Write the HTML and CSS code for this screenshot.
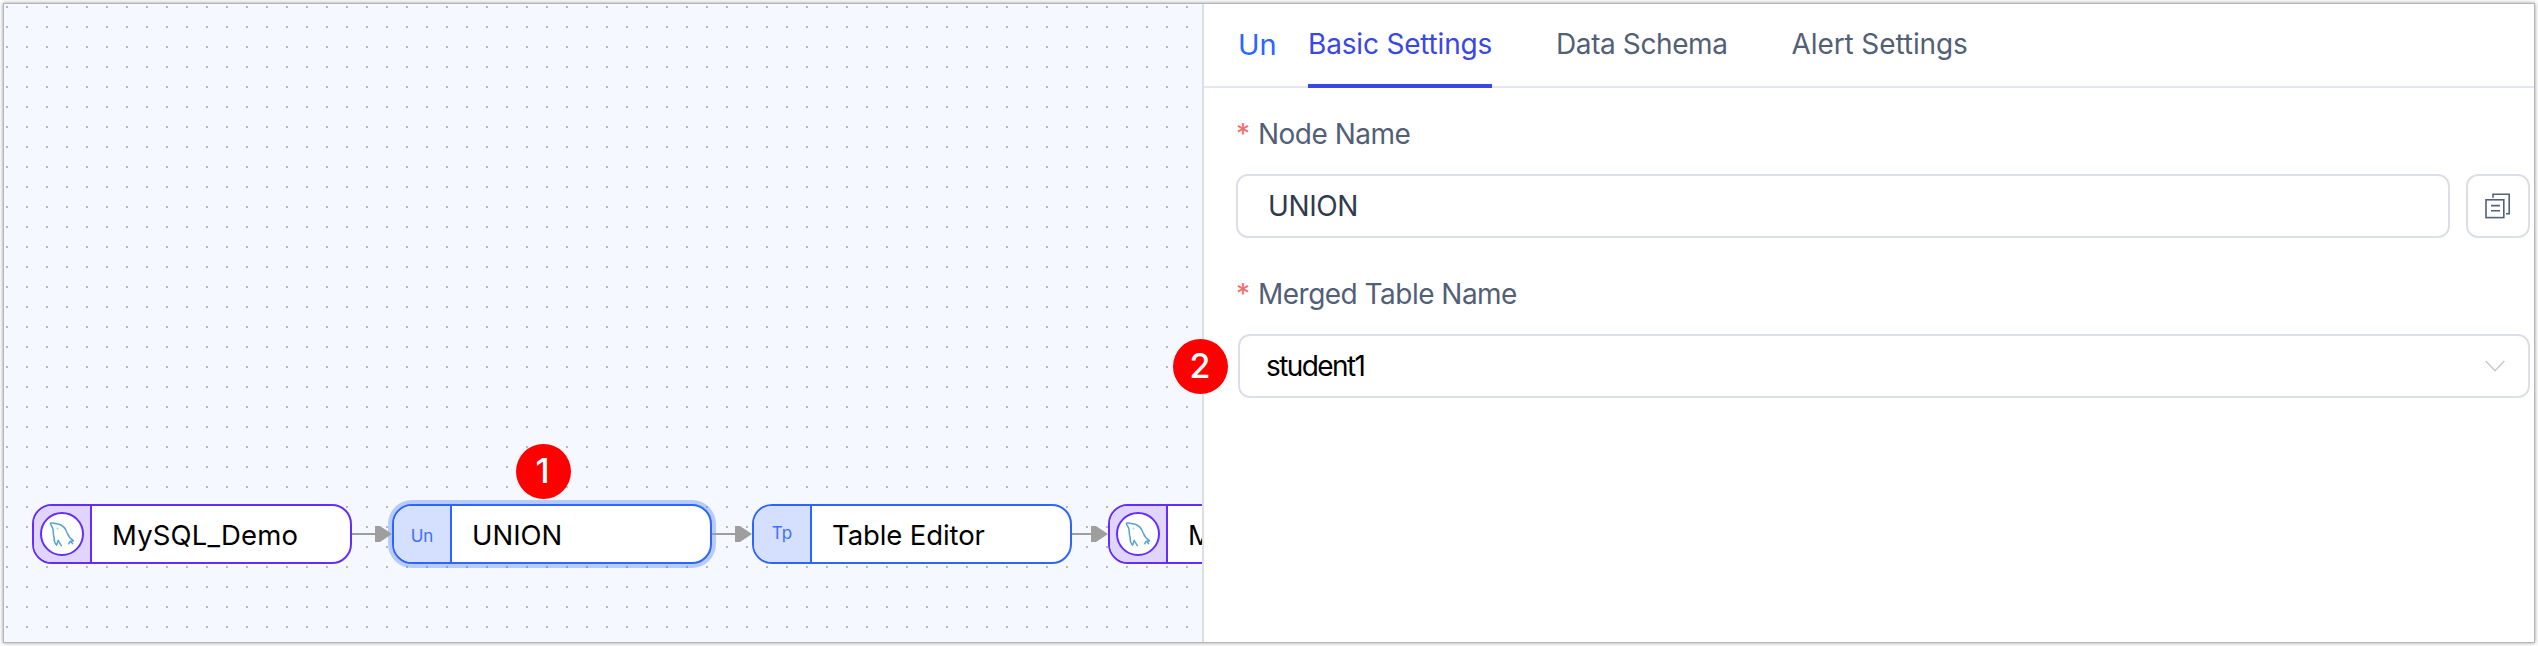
FILE: index.html
```html
<!DOCTYPE html>
<html lang="en">
<head>
<meta charset="utf-8">
<title>UNION node settings</title>
<link rel="stylesheet" href="styles.css">
</head>
<body>
<svg class="defs" aria-hidden="true">
  <symbol id="dolphin" viewBox="0 0 44 44">
    <circle cx="22" cy="22" r="21" fill="#fff" stroke="#652cff" stroke-width="2"/>
    <g fill="none" stroke="#5aa3d0" stroke-width="1.5" stroke-linejoin="round" stroke-linecap="round">
      <path d="M21.300 33.700C20.300 31.800 19 30.500 18.200 28.300C17.600 29.300 17.400 31.500 16.600 33.100C15 31.500 14 28.500 14.200 25.800C12.800 22.500 13.600 19.500 12.800 16.500C12 14 10.600 13.600 10.400 11.300C13.500 9.900 15.800 12.100 18.500 12C22.500 13.100 25.800 16.800 27.200 21C28.300 24 30 26.600 33.600 28.900C32.500 29.300 31.400 29 30.400 29.300L32.700 31.800M30.300 29.300C29.600 30 29 31.200 28.800 31.800"/>
    </g>
    <circle cx="17.500" cy="16.500" r="1" fill="#a9d3ea"/>
  </symbol>
</svg>
<main class="window">
  <section class="canvas">
    <div class="node source n1"><div class="mark"><svg><use href="#dolphin"/></svg></div><div class="label demo">MySQL_Demo</div></div>
    <div class="node n2 selected"><div class="mark un">Un</div><div class="label">UNION</div></div>
    <div class="node n3"><div class="mark tp">Tp</div><div class="label editor">Table Editor</div></div>
    <div class="node source n4"><div class="mark"><svg><use href="#dolphin"/></svg></div><div class="label demo">MySQL_Demo</div></div>
    <svg class="edge e1" viewBox="0 0 40 16"><path d="M0 7h24v2H0zM23 0h5l12 8-12 8h-5z"/></svg>
    <svg class="edge e2" viewBox="0 0 40 16"><path d="M0 7h24v2H0zM23 0h5l12 8-12 8h-5z"/></svg>
    <svg class="edge e3" viewBox="4 0 36 16"><path d="M4 7h20v2H4zM23 0h5l12 8-12 8h-5z"/></svg>
    <div class="step s1">1</div>
  </section>
  <aside class="panel">
    <nav class="tabs">
      <span class="kind">Un</span>
      <span class="tab active">Basic Settings</span>
      <span class="tab schema">Data Schema</span>
      <span class="tab alert">Alert Settings</span>
    </nav>
    <div class="form">
      <label class="caption"><i>*</i><span>Node Name</span></label>
      <div class="row">
        <div class="field name"><span>UNION</span></div>
        <div class="copy"><svg viewBox="0 0 26 26" fill="none" stroke="#52627a" stroke-width="1.600"><rect x="1" y="6.800" width="17.800" height="17.800"/><path d="M8 4.800V1.300H24.200V20.700H21M6 12.600h9M6 17.800h9"/></svg></div>
      </div>
      <label class="caption second"><i>*</i><span>Merged Table Name</span></label>
      <div class="field select"><span>student1</span><svg viewBox="0 0 20 12"><path d="M.7 1 10 10.700 19.300 1" fill="none" stroke="#c6cad1" stroke-width="1.500"/></svg></div>
    </div>
  </aside>
  <div class="step s2">2</div>
</main>
</body>
</html>
```
FILE: styles.css
```css
* { box-sizing: border-box; }
body { margin: 0; padding: 4px; background: #fff; font-family: Inter, "Liberation Sans", sans-serif; }
.defs { position: absolute; width: 0; height: 0; }
.window { position: relative; display: flex; width: 2530px; height: 638px; background: #fff; box-shadow: 0 0 0 1px #b5b5b5, 0 0 4px 1px rgba(0,0,0,.4); }
.canvas { position: relative; overflow: hidden; width: 1198px; background-color: #f5f8ff; background-image: conic-gradient(from 0deg at 2px 2px, transparent 75%, #b5b8bd 0); background-size: 20px 20px; background-position: 2px 2px; }
.node { position: absolute; top: 500px; display: flex; width: 320px; height: 60px; border: 2px solid #2c65ff; border-radius: 20px; background: #fff; color: #000; }
.source { border-color: #652cff; }
.selected { box-shadow: 0 0 0 4px rgba(44,101,255,.3); }
.n1 { left: 28px; } .n2 { left: 388px; } .n3 { left: 748px; } .n4 { left: 1104px; }
.mark { display: flex; align-items: center; justify-content: center; width: 58px; border-right: 2px solid #2c65ff; border-radius: 18px 0 0 18px; background: #d5dfff; color: #3b70ff; font-size: 17px; }
.source .mark { border-color: #652cff; background: #e0d5ff; }
.mark svg { width: 44px; height: 44px; }
.un { padding-top: 3px; }
.tp { padding-bottom: 2px; }
.label { padding-left: 20px; font-size: 27.500px; line-height: 58px; white-space: nowrap; }
.demo { letter-spacing: .15px; }
.editor { letter-spacing: -.1px; }
.edge { position: absolute; top: 522px; width: 40px; height: 16px; fill: #9e9e9e; }
.e1 { left: 348px; } .e2 { left: 708px; } .e3 { left: 1068px; width: 36px; }
.step { position: absolute; width: 55px; height: 55px; border-radius: 50%; background: #f00; color: #fff; font-size: 34px; font-weight: 500; line-height: 54px; text-align: center; }
.s1 { left: 512px; top: 440px; padding-right: 2px; }
.s2 { left: 1169px; top: 335px; padding-right: 1px; }
.panel { width: 1332px; border-left: 2px solid #dcdfe6; background: #fff; }
.tabs { display: flex; height: 84px; padding-left: 34px; border-bottom: 2px solid #e4e7ed; color: #535f75; font-size: 28px; line-height: 80px; white-space: nowrap; }
.kind { width: 70px; color: #2c65ff; font-size: 29px; line-height: 82px; }
.tab { height: 84px; margin-right: 64px; }
.active { width: 184px; border-bottom: 4px solid #3b47e5; color: #3b47e5; letter-spacing: -.18px; }
.schema { letter-spacing: -.4px; }
.alert { letter-spacing: -.1px; }
.form { padding: 28px 4px 0 32px; }
.caption { display: flex; height: 58px; color: #535f75; font-size: 28px; line-height: 36px; letter-spacing: -.52px; white-space: nowrap; }
.caption i { width: 22px; color: #f56c6c; font-style: normal; }
.row { display: flex; gap: 16px; }
.field { display: flex; align-items: center; height: 64px; border: 2px solid #dcdfe6; border-radius: 12px; font-size: 28px; }
.name { flex: 1; padding-left: 30px; color: #303b4b; letter-spacing: -.4px; }
.copy { display: flex; align-items: center; justify-content: center; width: 64px; height: 64px; border: 2px solid #dcdfe6; border-radius: 12px; }
.copy svg { width: 26px; height: 26px; }
.second { margin-top: 38px; }
.select { justify-content: space-between; margin-left: 2px; padding: 0 23px 0 26px; color: #000; letter-spacing: -1.600px; }
.select svg { width: 20px; height: 12px; }
```
